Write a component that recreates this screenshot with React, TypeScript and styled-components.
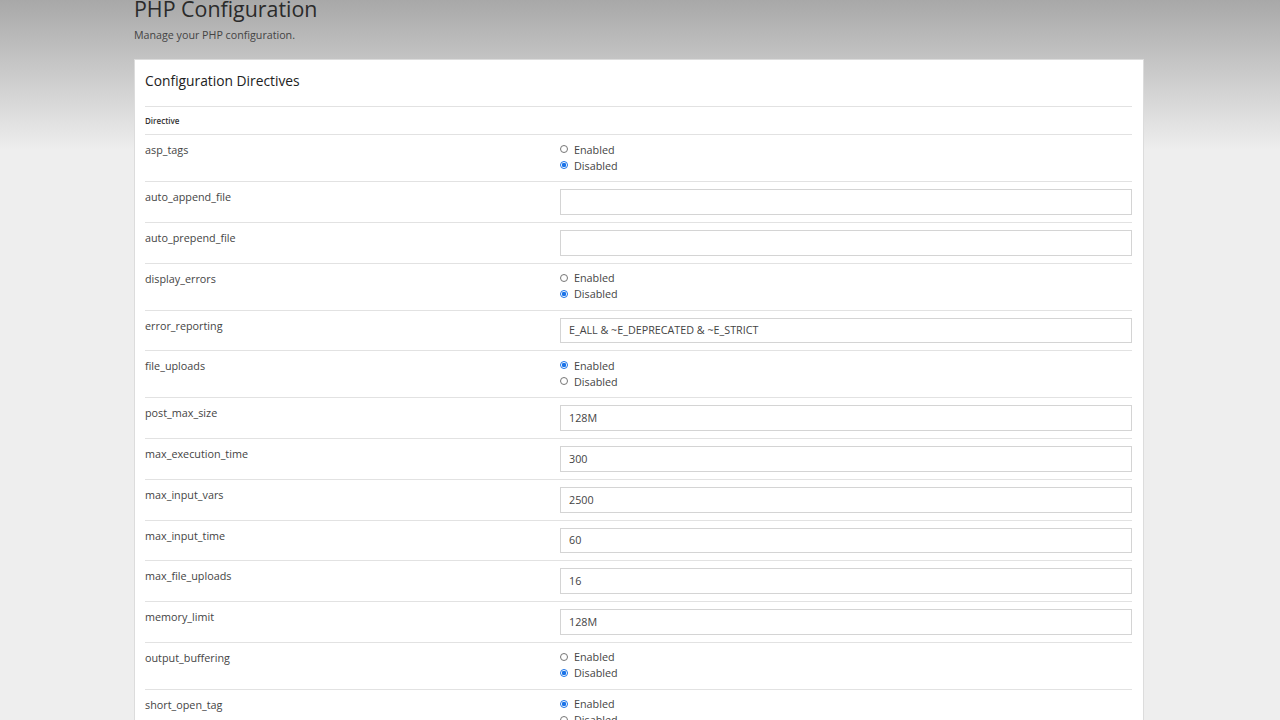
import React from "react";
import styled, { createGlobalStyle } from "styled-components";

const GlobalStyle = createGlobalStyle`
  html, body {
    margin: 0;
    padding: 0;
  }
  body {
    font-family: "Open Sans", "Liberation Sans", sans-serif;
    color: #333;
    background: linear-gradient(to bottom, #a8a8a8 0px, #eeeeee 150px, #eeeeee 100%);
    background-repeat: no-repeat;
    background-color: #eeeeee;
    min-height: 720px;
  }
`;

const Page = styled.div`
  width: 1010px;
  margin-left: 134px;
  margin-top: -6px;
`;

const Heading = styled.h1`
  margin: 0;
  font-size: 21.4px;
  font-weight: 400;
  line-height: 30px;
  color: #2a2a2a;
`;

const Subtitle = styled.p`
  margin: 3px 0 0;
  font-size: 10.7px;
  line-height: 16px;
  color: #444;
`;

const Card = styled.section`
  margin-top: 16px;
  background: #fff;
  border: 1px solid #dcdcdc;
  padding: 0 11px 20px 10px;
`;

const CardTitle = styled.h2`
  margin: 0;
  padding: 12px 0 0;
  height: 34px;
  font-size: 13.8px;
  font-weight: 400;
  line-height: 18px;
  color: #222;
  border-bottom: 1px solid #e2e2e2;
`;

const Table = styled.table`
  width: 100%;
  border-collapse: collapse;
`;

const HeadCell = styled.th`
  text-align: left;
  font-size: 8px;
  font-weight: 600;
  height: 27.4px;
  padding: 0;
  border-bottom: 1px solid #e2e2e2;
  color: #333;
`;

const Row = styled.tr`
  border-bottom: 1px solid #e2e2e2;
`;

const LabelCell = styled.td`
  width: 415px;
  vertical-align: top;
  padding: 8px 0 0;
  font-size: 10.8px;
  line-height: 14px;
  color: #444;
`;

const ValueCell = styled.td<{ $kind: "radio" | "text" }>`
  vertical-align: top;
  padding: ${(p) => (p.$kind === "radio" ? "6px 0 7.8px" : "7px 0 7px")};
`;

const RadioLabel = styled.label`
  display: flex;
  align-items: center;
  height: 16px;
  font-size: 10.8px;
  color: #444;
`;

const RadioDot = styled.span<{ $on: boolean }>`
  box-sizing: border-box;
  width: 8px;
  height: 8px;
  margin: 0 6px 0 0;
  border-radius: 50%;
  border: 1px solid ${(p) => (p.$on ? "#1a73e8" : "#767676")};
  background: ${(p) => (p.$on ? "radial-gradient(circle, #1a73e8 0 2px, #fff 2.4px)" : "#fff")};
  ${(p) => (p.$on ? "border-width: 1.3px;" : "")}
`;

const TextInput = styled.input`
  box-sizing: border-box;
  display: block;
  width: 100%;
  height: 25.8px;
  padding: 0 8px;
  border: 1px solid #d4d4d4;
  font-family: "Open Sans", "Liberation Sans", sans-serif;
  font-size: 10.75px;
  color: #444;
  outline: none;
  margin: 0;
`;

type Directive =
  | { name: string; kind: "radio"; enabled: boolean }
  | { name: string; kind: "text"; value: string };

const directives: Directive[] = [
  { name: "asp_tags", kind: "radio", enabled: false },
  { name: "auto_append_file", kind: "text", value: "" },
  { name: "auto_prepend_file", kind: "text", value: "" },
  { name: "display_errors", kind: "radio", enabled: false },
  { name: "error_reporting", kind: "text", value: "E_ALL & ~E_DEPRECATED & ~E_STRICT" },
  { name: "file_uploads", kind: "radio", enabled: true },
  { name: "post_max_size", kind: "text", value: "128M" },
  { name: "max_execution_time", kind: "text", value: "300" },
  { name: "max_input_vars", kind: "text", value: "2500" },
  { name: "max_input_time", kind: "text", value: "60" },
  { name: "max_file_uploads", kind: "text", value: "16" },
  { name: "memory_limit", kind: "text", value: "128M" },
  { name: "output_buffering", kind: "radio", enabled: false },
  { name: "short_open_tag", kind: "radio", enabled: true },
  { name: "upload_max_filesize", kind: "text", value: "128M" },
];

export default function App() {
  return (
    <>
      <GlobalStyle />
      <Page>
        <Heading>PHP Configuration</Heading>
        <Subtitle>Manage your PHP configuration.</Subtitle>
        <Card>
          <CardTitle>Configuration Directives</CardTitle>
          <Table>
            <thead>
              <tr>
                <HeadCell colSpan={2}>Directive</HeadCell>
              </tr>
            </thead>
            <tbody>
              {directives.map((d) => (
                <Row key={d.name}>
                  <LabelCell>{d.name}</LabelCell>
                  {d.kind === "radio" ? (
                    <ValueCell $kind="radio">
                      <RadioLabel>
                        <RadioDot $on={d.enabled} />
                        Enabled
                      </RadioLabel>
                      <RadioLabel>
                        <RadioDot $on={!d.enabled} />
                        Disabled
                      </RadioLabel>
                    </ValueCell>
                  ) : (
                    <ValueCell $kind="text">
                      <TextInput defaultValue={d.value} />
                    </ValueCell>
                  )}
                </Row>
              ))}
            </tbody>
          </Table>
        </Card>
      </Page>
    </>
  );
}
